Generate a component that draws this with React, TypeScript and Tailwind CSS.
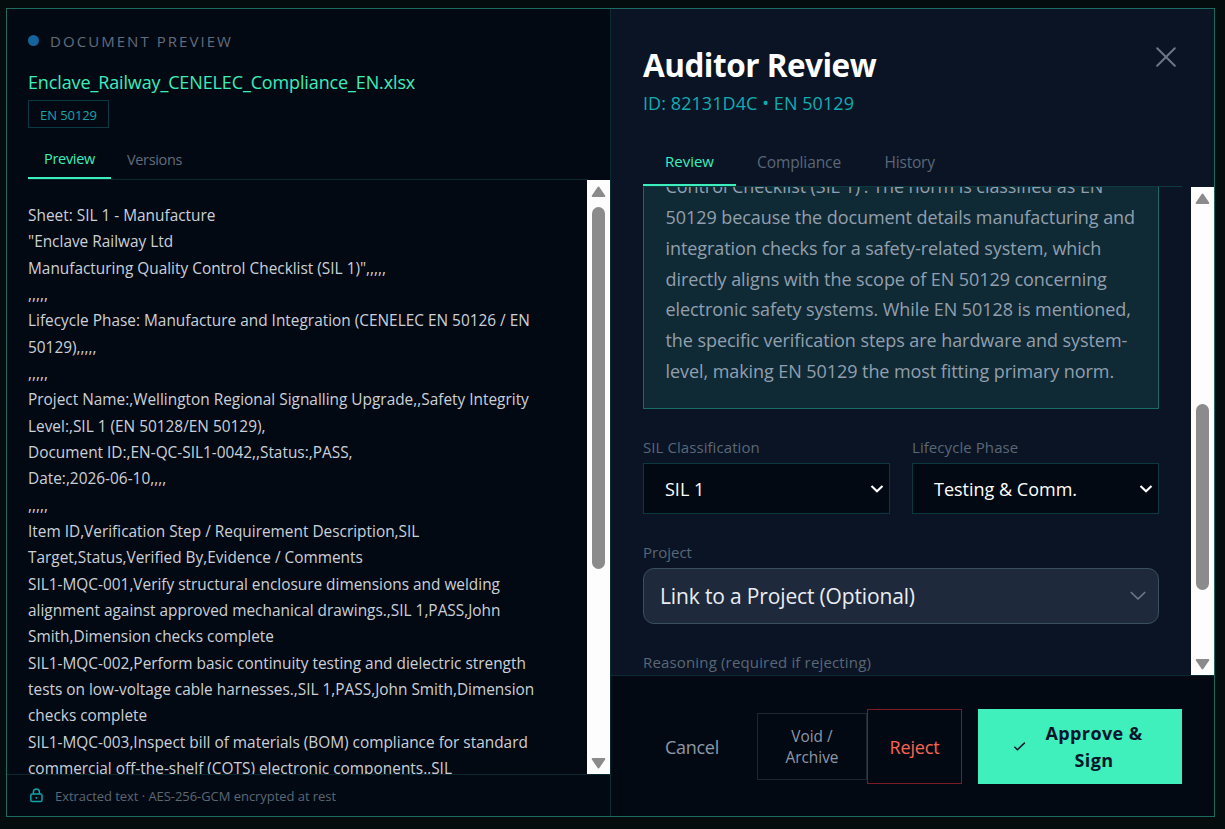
import type { ReactNode } from "react";

const documentLines = [
  "Sheet: SIL 1 - Manufacture",
  '"Enclave Railway Ltd',
  'Manufacturing Quality Control Checklist (SIL 1)",,,,,',
  ",,,,,",
  "Lifecycle Phase: Manufacture and Integration (CENELEC EN 50126 / EN",
  "50129),,,,,",
  ",,,,,",
  "Project Name:,Wellington Regional Signalling Upgrade,,Safety Integrity",
  "Level:,SIL 1 (EN 50128/EN 50129),",
  "Document ID:,EN-QC-SIL1-0042,,Status:,PASS,",
  "Date:,2026-06-10,,,,",
  ",,,,,",
  "Item ID,Verification Step / Requirement Description,SIL",
  "Target,Status,Verified By,Evidence / Comments",
  "SIL1-MQC-001,Verify structural enclosure dimensions and welding",
  "alignment against approved mechanical drawings.,SIL 1,PASS,John",
  "Smith,Dimension checks complete",
  "SIL1-MQC-002,Perform basic continuity testing and dielectric strength",
  "tests on low-voltage cable harnesses.,SIL 1,PASS,John Smith,Dimension",
  "checks complete",
  "SIL1-MQC-003,Inspect bill of materials (BOM) compliance for standard",
  "commercial off-the-shelf (COTS) electronic components.,SIL",
];

const rationaleLines = [
  "Control Checklist (SIL 1)'. The norm is classified as EN",
  "50129 because the document details manufacturing and",
  "integration checks for a safety-related system, which",
  "directly aligns with the scope of EN 50129 concerning",
  "electronic safety systems. While EN 50128 is mentioned,",
  "the specific verification steps are hardware and system-",
  "level, making EN 50129 the most fitting primary norm.",
];

function Arrow({ down = false }: { down?: boolean }) {
  return (
    <svg width="15" height="12" viewBox="0 0 15 12" className={down ? "rotate-180" : ""}>
      <path d="M7.5 1.5 L13.3 10 H1.7 Z" fill="#8b8b8b" stroke="#8b8b8b" strokeWidth="2" strokeLinejoin="round" />
    </svg>
  );
}

function Scrollbar({ children }: { children: ReactNode }) {
  return (
    <div className="flex w-[23px] shrink-0 flex-col items-center bg-[#fdfdfd]">
      <div className="flex h-[27px] shrink-0 items-center pb-[3px]">
        <Arrow />
      </div>
      <div className="min-h-0 flex-1">{children}</div>
      <div className="flex h-[23px] shrink-0 items-center">
        <Arrow down />
      </div>
    </div>
  );
}

function Field({ label, value }: { label: string; value: string }) {
  return (
    <div className="flex-1">
      <div className="h-[23px] text-[15px] leading-[23px] tracking-[0.07px] text-[#5a6775]">{label}</div>
      <div className="mt-[4px] flex h-[51px] items-center justify-between border border-[#0c3840] bg-[#030912] pr-[5px] pl-[21px]">
        <span className="mt-[3px] text-[18px] text-white">{value}</span>
        <svg width="14" height="10" viewBox="0 0 14 10" className="mt-px">
          <path d="M1.5 2 L7 7.3 L12.5 2" fill="none" stroke="#fff" strokeWidth="2.1" />
        </svg>
      </div>
    </div>
  );
}

function DocumentPanel() {
  return (
    <section className="flex w-[604px] shrink-0 flex-col border-r border-[#0b2b34] bg-[#030912]">
      <header className="mr-[22px] ml-[21px] h-[171px] shrink-0 border-b border-[#0b2730]">
        <div className="mt-[20px] flex h-[24px] items-center">
          <span className="-mt-px h-[11px] w-[11px] rounded-full bg-[#14639a]" />
          <span className="ml-[11px] text-[15px] leading-[24px] tracking-[2.05px] text-[#626c7d]">DOCUMENT PREVIEW</span>
        </div>
        <div className="mt-[15px] h-[28px] text-[18px] leading-[28px] tracking-[-0.13px] text-[#3ceebb]">
          Enclave_Railway_CENELEC_Compliance_EN.xlsx
        </div>
        <div className="mt-[4px] flex h-[28px] w-[81px] items-center justify-center border border-[#0a3945] pt-[3px] text-[13px] tracking-[-0.08px] text-[#14a5ad]">
          EN 50129
        </div>
        <div className="mt-[10px] flex h-[41px] leading-[42px]">
          <div className="w-[83px] border-b-2 border-[#3ceebb] text-center text-[14.5px] tracking-[-0.3px] text-[#3ceebb]">Preview</div>
          <div className="pl-[16px] text-[14.5px] leading-[44px] tracking-[-0.35px] text-[#626c7d]">Versions</div>
        </div>
      </header>
      <div className="flex min-h-0 flex-1">
        <div className="min-w-0 flex-1 overflow-hidden pt-[23px] pl-[21px] text-[15.4px] leading-[26.33px] whitespace-pre text-[#cbd0d8]">
          {documentLines.map((line, i) => (
            <div key={i}>{line}</div>
          ))}
        </div>
        <Scrollbar>
          <div className="h-[362px] w-[13px] rounded-full bg-[#8b8b8b]" />
        </Scrollbar>
      </div>
      <footer className="flex h-[42px] shrink-0 items-center border-t border-[#0b2730] pl-[23px]">
        <svg width="13" height="15" viewBox="0 0 13 15" fill="none" stroke="#10a3a8" strokeWidth="1.5">
          <rect x="0.8" y="6" width="11.2" height="7.6" rx="1.6" />
          <path d="M3.4 6 V3.9 a3 3 0 0 1 6 0 V6" />
          <path d="M6.4 9 v1.8" />
        </svg>
        <span className="mt-[2px] ml-[12px] text-[13px] tracking-[-0.05px] text-[#5a6775]">Extracted text · AES-256-GCM encrypted at rest</span>
      </footer>
    </section>
  );
}

function ReviewPanel() {
  return (
    <section className="flex min-w-0 flex-1 flex-col bg-[#0a1425]">
      <header className="flex h-[178px] shrink-0 flex-col px-8">
        <div className="flex justify-between">
          <div>
            <h1 className="mt-[35px] h-[42px] text-[31.5px] leading-[42px] font-bold tracking-[-0.5px] text-white">Auditor Review</h1>
            <p className="mt-[3px] h-[28px] text-[18px] leading-[28px] tracking-[0.07px] text-[#10acb2]">ID: 82131D4C • EN 50129</p>
          </div>
          <svg width="20" height="20" viewBox="0 0 20 20" className="mt-[38px] mr-[6px]">
            <path d="M1.2 1.2 L18.8 18.8 M18.8 1.2 L1.2 18.8" stroke="#6b7686" strokeWidth="2" strokeLinecap="round" />
          </svg>
        </div>
        <nav className="mt-auto flex h-[48px] border-b border-[#0b3a41] leading-[47px]">
          <div className="w-[93px] border-b-2 border-[#3ceebb] text-center text-[15px] leading-[45px] text-[#3ceebb]">Review</div>
          <div className="pl-[21px] text-[15.5px] tracking-[-0.1px] text-[#5b6777]">Compliance</div>
          <div className="pl-[43.5px] text-[15.5px] tracking-[-0.2px] text-[#5b6777]">History</div>
        </nav>
      </header>
      <div className="flex min-h-0 flex-1">
        <div className="min-w-0 flex-1 overflow-hidden px-8">
          <div className="-mt-[39.6px] border border-[#1a6b60] bg-[#0f2a35] px-[21.5px] pt-[22.8px] pb-[21.2px] text-[18px] leading-[30.8px] tracking-[-0.07px] whitespace-pre text-[#939fae]">
            {rationaleLines.map((line) => (
              <div key={line}>{line}</div>
            ))}
          </div>
          <div className="mt-[27px] flex gap-[22px]">
            <Field label="SIL Classification" value="SIL 1" />
            <Field label="Lifecycle Phase" value="Testing & Comm." />
          </div>
          <div className="mt-[27px] h-[23px] text-[15px] leading-[23px] text-[#5a6775]">Project</div>
          <div className="mt-[4px] flex h-[56px] items-center justify-between rounded-[11px] border border-[#3b4f5e] bg-[#1e293b] pr-[12px] pl-[16px]">
            <span className="mt-[2px] text-[21px] tracking-[-0.15px] text-[#e9edf3]">Link to a Project (Optional)</span>
            <svg width="16" height="10" viewBox="0 0 16 10">
              <path d="M1.3 1.5 L8 8 L14.7 1.5" fill="none" stroke="#6a7a8a" strokeWidth="1.7" strokeLinecap="round" strokeLinejoin="round" />
            </svg>
          </div>
          <div className="mt-[27px] h-[23px] text-[15px] leading-[23px] tracking-[0.16px] text-[#5a6775]">Reasoning (required if rejecting)</div>
        </div>
        <Scrollbar>
          <div className="mt-[190px] h-[186px] w-[13px] rounded-full bg-[#8b8b8b]" />
        </Scrollbar>
      </div>
      <footer className="flex h-[141px] shrink-0 items-center border-t border-[#0b2b34] bg-[#030912] px-8 pt-px">
        <button className="w-[98px] pt-[2px] text-[18px] tracking-[-0.3px] text-[#8d98a8]">Cancel</button>
        <button className="ml-[16px] h-[67px] w-[110px] border border-[#1d2732] pt-px text-[15.4px] leading-[21px] text-[#8d98a8]">
          Void /<br />Archive
        </button>
        <button className="h-[75px] w-[95px] border border-[#7a1d26] pt-[2px] text-[18px] tracking-[-0.18px] text-[#fb6454]">Reject</button>
        <button className="ml-[16px] flex h-[75px] w-[204px] items-center bg-[#3ff0bd] text-[#06152a]">
          <svg width="13" height="11" viewBox="0 0 13 11" className="ml-[35px]">
            <path d="M1.4 5.8 L4.4 8.8 L11.8 1.6" fill="none" stroke="currentColor" strokeWidth="1.5" />
          </svg>
          <span className="ml-[19px] w-[98px] text-center text-[18px] leading-[27px] font-bold tracking-[0.4px] whitespace-nowrap">
            Approve &amp;<br />Sign
          </span>
        </button>
      </footer>
    </section>
  );
}

export default function App() {
  return (
    <div className="h-[829px] w-[1225px] overflow-hidden bg-[#040c0d] pt-[8px] pl-[6px] font-['Open_Sans',sans-serif]">
      <div className="flex h-[809px] w-[1209px] border border-[#1c6b60]">
        <DocumentPanel />
        <ReviewPanel />
      </div>
    </div>
  );
}
